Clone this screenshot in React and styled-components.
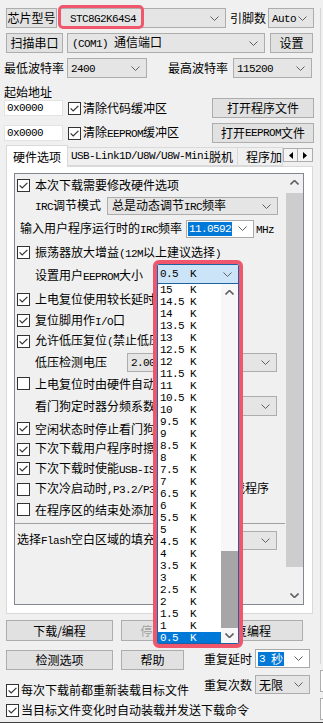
import React from 'react';
import styled, { createGlobalStyle } from 'styled-components';

const GlobalStyle = createGlobalStyle`
  html, body { margin: 0; padding: 0; }
  body {
    background: #f0f0f0;
    font-family: "Noto Sans CJK SC", "Noto Sans", sans-serif;
    font-size: 12px;
    line-height: 1;
    color: #000;
  }
  * { box-sizing: border-box; }
`;

const Window = styled.div`
  position: relative;
  display: flex;
  width: 323px;
  height: 723px;
  overflow: hidden;
  background: #f0f0f0;
  border-bottom: 1px solid #3f3f3f;
`;

const Main = styled.div`
  width: 316px;
  flex-shrink: 0;
  padding: 8px 2px 0 4px;
  display: flex;
  flex-direction: column;
`;

const Edge = styled.div`
  flex: 1;
  display: flex;
  flex-direction: column;
  padding: 8px 0 2px 4px;
`;

const EdgeLine = styled.div`
  flex: 1;
  border-left: 1px solid #d6d6d6;
`;

const EdgeBox = styled.div`
  height: 22px;
  margin-top: 6px;
  border: 1px solid #adadad;
  border-right: 0;
  background: #fff;
`;

const Row = styled.div`
  display: flex;
  align-items: center;
  flex-shrink: 0;
  height: ${(p) => p.$h || 20}px;
  margin-top: ${(p) => p.$mt || 0}px;
  padding-left: ${(p) => p.$pl || 0}px;
  white-space: nowrap;
`;

const Text = styled.span`
  margin-left: ${(p) => p.$ml || 0}px;
  white-space: nowrap;
  flex-shrink: 0;
`;

const M = styled.span`
  font-family: "Liberation Mono", "DejaVu Sans Mono", monospace;
  font-size: 11px;
  letter-spacing: -0.6px;
  white-space: pre;
`;

const Btn = styled.button`
  display: flex;
  align-items: center;
  justify-content: center;
  flex-shrink: 0;
  width: ${(p) => p.$w}px;
  height: ${(p) => p.$h || 20}px;
  margin: 0 0 0 ${(p) => p.$ml || 0}px;
  padding: 0;
  font: inherit;
  font-size: 12px;
  line-height: 1;
  color: ${(p) => (p.$disabled ? '#a0a0a0' : '#000')};
  background: #e1e1e1;
  border: 1px solid #adadad;
  white-space: nowrap;
`;

const ComboBox = styled.div`
  display: flex;
  align-items: center;
  justify-content: space-between;
  flex-shrink: 0;
  width: ${(p) => p.$w}px;
  height: ${(p) => p.$h || 20}px;
  margin-left: ${(p) => p.$ml || 0}px;
  padding: 0 6px 0 ${(p) => (p.$pad === undefined ? 4 : p.$pad)}px;
  background: ${(p) => (p.$edit ? '#fff' : '#e5e5e5')};
  border: 1px solid ${(p) => (p.$edit ? '#a9a9a9' : '#adadad')};
  white-space: nowrap;
  overflow: hidden;
`;

const Sel = styled.span`
  display: inline-flex;
  align-items: center;
  height: 14px;
  padding: 0 1px;
  background: #0078d7;
  color: #fff;
`;

const Chevron = ({ up, width = 1 }) => (
  <svg width="9" height="5" viewBox="0 0 9 5" style={{ flexShrink: 0 }}>
    <polyline
      points={up ? '0.5,4.5 4.5,0.5 8.5,4.5' : '0.5,0.5 4.5,4.5 8.5,0.5'}
      fill="none"
      stroke="#606060"
      strokeWidth={width}
    />
  </svg>
);

const Combo = ({ children, ...rest }) => (
  <ComboBox {...rest}>
    <span>{children}</span>
    <Chevron />
  </ComboBox>
);

const CheckBox = styled.span`
  display: inline-flex;
  align-items: center;
  justify-content: center;
  flex-shrink: 0;
  width: 13px;
  height: 13px;
  margin-left: ${(p) => p.$ml || 0}px;
  border: 1px solid #333;
  background: #fff;
`;

const Check = ({ on, ml }) => (
  <CheckBox $ml={ml}>
    {on && (
      <svg width="11" height="11" viewBox="0 0 11 11">
        <path d="M1.6 5.4 L4.2 8 L9.4 2.8" fill="none" stroke="#333" strokeWidth="1.2" />
      </svg>
    )}
  </CheckBox>
);

const TextInput = styled.div`
  display: flex;
  align-items: center;
  width: 59px;
  height: 16px;
  padding-left: 2px;
  background: #fff;
  border: 1px solid #e3e3e3;
`;

const AddrGrid = styled.div`
  display: grid;
  grid-template-columns: 1fr 102px;
  grid-auto-rows: 22px;
  row-gap: 3px;
  align-items: center;
  margin-top: -3px;
`;

/* tabs */
const TabStrip = styled.div`
  position: relative;
  z-index: 1;
  display: flex;
  align-items: flex-end;
  height: 21px;
  margin-top: 1px;
  padding-left: 2px;
`;

const Tab = styled.div`
  display: flex;
  align-items: center;
  justify-content: ${(p) => (p.$active ? 'center' : 'flex-start')};
  flex-shrink: 0;
  width: ${(p) => p.$w}px;
  height: ${(p) => (p.$active ? 22 : 19)}px;
  margin-bottom: ${(p) => (p.$active ? -1 : 0)}px;
  padding-left: ${(p) => p.$pl || 0}px;
  background: ${(p) => (p.$active ? '#fff' : '#f0f0f0')};
  border: 1px solid #d9d9d9;
  border-bottom: ${(p) => (p.$active ? '0' : '1px solid #d9d9d9')};
  border-left: ${(p) => (p.$first ? '1px solid #d9d9d9' : '0')};
  overflow: hidden;
  white-space: nowrap;
`;

const TabArrow = styled.div`
  display: flex;
  align-items: center;
  justify-content: center;
  align-self: flex-start;
  flex-shrink: 0;
  width: 15px;
  height: 14px;
  margin-top: 3px;
  background: #f4f4f4;
  border: 1px solid #adadad;
  border-left: ${(p) => (p.$first ? '1px solid #adadad' : '0')};
`;

const Panel = styled.div`
  display: flex;
  width: 307px;
  height: 448px;
  margin-left: 2px;
  padding: 6px 8px 8px 7px;
  background: #fff;
  border: 1px solid #d9d9d9;
`;

const PropBox = styled.div`
  flex: 1;
  display: flex;
  border: 1px solid #828790;
  background: #f0f0f0;
  overflow: hidden;
`;

const PropArea = styled.div`
  flex: 1;
  display: flex;
  flex-direction: column;
  overflow: hidden;
`;

const Separator = styled.div`
  height: 1px;
  margin: 4px 1px 0 0;
  background: #a0a0a0;
`;

const ScrollBar = styled.div`
  display: flex;
  flex-direction: column;
  width: 17px;
  flex-shrink: 0;
  background: ${(p) => p.$track || '#f0f0f0'};
`;

const ScrollArrow = styled.div`
  display: flex;
  align-items: center;
  justify-content: center;
  height: ${(p) => p.$h || 17}px;
  flex-shrink: 0;
`;

const ScrollTrack = styled.div`
  flex: 1;
  display: flex;
  flex-direction: column;
  justify-content: ${(p) => p.$align || 'flex-start'};
`;

const Thumb = styled.div`
  height: ${(p) => p.$h}px;
  margin-top: ${(p) => p.$mt || 0}px;
  background: ${(p) => p.$color};
`;

/* bottom */
const Lower = styled.div`
  display: flex;
  margin-top: 8px;
`;

const LowerLeft = styled.div`
  flex: 1;
  min-width: 0;
  display: flex;
  flex-direction: column;
`;

const LowerRight = styled.div`
  width: 106px;
  flex-shrink: 0;
  margin-right: 4px;
  display: flex;
  flex-direction: column;
`;

/* open dropdown & annotations */
const Highlight = styled.div`
  position: absolute;
  left: 58px;
  top: 5px;
  width: 86px;
  height: 24px;
  border: 3px solid #f0566c;
  border-radius: 5px;
`;

const DropFrame = styled.div`
  position: absolute;
  left: 153px;
  top: 260px;
  width: 90px;
  height: 388px;
  display: flex;
  flex-direction: column;
  border: 4px solid #f0566c;
  border-radius: 6px;
  background: #fff;
  overflow: hidden;
`;

const DropHead = styled.div`
  display: flex;
  align-items: center;
  justify-content: space-between;
  height: 20px;
  flex-shrink: 0;
  padding: 0 6px 0 2px;
  background: #cce4f7;
  border: 1px solid #1f62a3;
`;

const DropList = styled.div`
  flex: 1;
  display: flex;
  border: 1px solid #1f62a3;
  border-top: 0;
  overflow: hidden;
`;

const Items = styled.div`
  flex: 1;
  display: flex;
  flex-direction: column;
`;

const Item = styled.div`
  display: flex;
  align-items: center;
  height: 12px;
  flex-shrink: 0;
  padding-left: 2px;
  white-space: pre;
  background: ${(p) => (p.$sel ? '#0078d7' : 'transparent')};
  color: ${(p) => (p.$sel ? '#fff' : '#000')};
`;

const sizes = [];
for (let v = 15; v >= 0.5; v -= 0.5) sizes.push(String(v));
const sizeLabel = (s) => `${s.padEnd(5, ' ')}K`;

const rowH = [22, 20, 25, 23, 24, 22, 21, 20, 22, 21, 24, 21, 20, 19, 22, 19];

const Arrow = ({ dir }) => (
  <svg width="4" height="7" viewBox="0 0 4 7">
    <polygon points={dir === 'left' ? '4,0 0,3.5 4,7' : '0,0 4,3.5 0,7'} fill="#000" />
  </svg>
);

export default function App() {
  return (
    <>
      <GlobalStyle />
      <Window>
        <Main>
          <Row>
            <Btn $w={51} $ml={2}>芯片型号</Btn>
            <Combo $w={166} $ml={3} $pad={9}><M>STC8G2K64S4</M></Combo>
            <Text $ml={4}>引脚数</Text>
            <Combo $w={46} $ml={2} $pad={3}><M>Auto</M></Combo>
          </Row>
          <Row $mt={5}>
            <Btn $w={57} $ml={2}>扫描串口</Btn>
            <Combo $w={198} $ml={4}><M>(COM1) </M>通信端口</Combo>
            <Btn $w={43} $ml={5}>设置</Btn>
          </Row>
          <Row $mt={5}>
            <Text>最低波特率</Text>
            <Combo $w={80} $ml={3} $pad={3}><M>2400</M></Combo>
            <Text $ml={21}>最高波特率</Text>
            <Combo $w={79} $ml={5} $pad={3}><M>115200</M></Combo>
          </Row>
          <Row $mt={6} $h={16}>
            <Text>起始地址</Text>
          </Row>
          <AddrGrid>
            <Row>
              <TextInput><M>0x0000</M></TextInput>
              <Check on ml={5} />
              <Text $ml={2}>清除代码缓冲区</Text>
            </Row>
            <Btn $w={102}>打开程序文件</Btn>
            <Row>
              <TextInput><M>0x0000</M></TextInput>
              <Check on ml={5} />
              <Text $ml={2}>清除<M>EEPROM</M>缓冲区</Text>
            </Row>
            <Btn $w={102}>打开<M>EEPROM</M>文件</Btn>
          </AddrGrid>

          <TabStrip>
            <Tab $active $first $w={62}>硬件选项</Tab>
            <Tab $w={170} $pl={3}><M>USB-Link1D/U8W/U8W-Mini</M>脱机</Tab>
            <Tab $w={45} $pl={8}>程序加密后传输</Tab>
            <TabArrow $first><Arrow dir="left" /></TabArrow>
            <TabArrow><Arrow dir="right" /></TabArrow>
          </TabStrip>
          <Panel>
            <PropBox>
              <PropArea>
                <Row $h={rowH[0]} $pl={2}>
                  <Check on />
                  <Text $ml={5}>本次下载需要修改硬件选项</Text>
                </Row>
                <Row $h={rowH[1]} $pl={20}>
                  <Text><M>IRC</M>调节模式</Text>
                  <Combo $w={171} $h={18} $ml={6}>总是动态调节<M>IRC</M>频率</Combo>
                </Row>
                <Row $h={rowH[2]} $pl={5}>
                  <Text>输入用户程序运行时的<M>IRC</M>频率</Text>
                  <Combo $w={68} $h={18} $ml={4} $pad={1} $edit><Sel><M>11.0592</M></Sel></Combo>
                  <Text $ml={2}><M>MHz</M></Text>
                </Row>
                <Row $h={rowH[3]} $pl={2}>
                  <Check on />
                  <Text $ml={5}>振荡器放大增益<M>(12M</M>以上建议选择<M>)</M></Text>
                </Row>
                <Row $h={rowH[4]} $pl={20}>
                  <Text>设置用户<M>EEPROM</M>大小</Text>
                </Row>
                <Row $h={rowH[5]} $pl={2}>
                  <Check on />
                  <Text $ml={5}>上电复位使用较长延时</Text>
                </Row>
                <Row $h={rowH[6]} $pl={2}>
                  <Check on />
                  <Text $ml={5}>复位脚用作<M>I/O</M>口</Text>
                </Row>
                <Row $h={rowH[7]} $pl={2}>
                  <Check on />
                  <Text $ml={5}>允许低压复位<M>(</M>禁止低压中断<M>)</M></Text>
                </Row>
                <Row $h={rowH[8]} $pl={20}>
                  <Text>低压检测电压</Text>
                  <Combo $w={150} $h={19} $ml={20} $pad={3}><M>2.00V</M></Combo>
                </Row>
                <Row $h={rowH[9]} $pl={2}>
                  <Check />
                  <Text $ml={5}>上电复位时由硬件自动启动看门狗</Text>
                </Row>
                <Row $h={rowH[10]} $pl={20}>
                  <Text>看门狗定时器分频系数</Text>
                  <Combo $w={116} $h={20} $ml={6} $pad={3}><M>256</M></Combo>
                </Row>
                <Row $h={rowH[11]} $pl={2}>
                  <Check on />
                  <Text $ml={5}>空闲状态时停止看门狗计数</Text>
                </Row>
                <Row $h={rowH[12]} $pl={2}>
                  <Check on />
                  <Text $ml={5}>下次下载用户程序时擦除用户<M>EEPROM</M>区</Text>
                </Row>
                <Row $h={rowH[13]} $pl={2}>
                  <Check on />
                  <Text $ml={5}>下次下载时使能<M>USB-ISP</M>下载</Text>
                </Row>
                <Row $h={rowH[14]} $pl={2}>
                  <Check />
                  <Text $ml={5}>下次冷启动时<M>,P3.2/P3.3</M>为<M>0/0</M>才可下载程序</Text>
                </Row>
                <Row $h={rowH[15]} $pl={2}>
                  <Check />
                  <Text $ml={5}>在程序区的结束处添加重要测试参数</Text>
                </Row>
                <Separator />
                <Row $h={20} $mt={6} $pl={2}>
                  <Text>选择<M>Flash</M>空白区域的填充值</Text>
                  <Combo $w={104} $h={19} $ml={6} $pad={3}><M>FF</M></Combo>
                </Row>
              </PropArea>
              <ScrollBar>
                <ScrollArrow><Chevron up width={1.6} /></ScrollArrow>
                <ScrollTrack>
                  <Thumb $h={374} $mt={2} $color="#cdcdcd" />
                </ScrollTrack>
                <ScrollArrow><Chevron width={1.6} /></ScrollArrow>
              </ScrollBar>
            </PropBox>
          </Panel>

          <Row $mt={6} $h={21}>
            <Btn $w={107} $h={21} $ml={2}>下载/编程</Btn>
            <Btn $w={63} $h={21} $ml={8} $disabled>停止</Btn>
            <Btn $w={112} $h={21} $ml={7}>重复编程</Btn>
          </Row>
          <Lower>
            <LowerLeft>
              <Row $mt={1}>
                <Btn $w={107} $ml={2}>检测选项</Btn>
                <Btn $w={63} $ml={8}>帮助</Btn>
              </Row>
              <Row $mt={10} $pl={2}>
                <Check on />
                <Text $ml={2}>每次下载前都重新装载目标文件</Text>
              </Row>
              <Row $pl={2}>
                <Check on />
                <Text $ml={2}>当目标文件变化时自动装载并发送下载命令</Text>
              </Row>
            </LowerLeft>
            <LowerRight>
              <Row $h={19}>
                <Text>重复延时</Text>
                <Combo $w={55} $h={19} $ml={3} $pad={2} $edit><Sel><M>3 </M>秒</Sel></Combo>
              </Row>
              <Row $h={19} $mt={7}>
                <Text>重复次数</Text>
                <Combo $w={55} $h={19} $ml={3} $pad={3}>无限</Combo>
              </Row>
            </LowerRight>
          </Lower>
        </Main>
        <Edge>
          <EdgeLine />
          <EdgeBox />
          <EdgeBox />
        </Edge>

        <Highlight />
        <DropFrame>
          <DropHead>
            <M>{sizeLabel('0.5')}</M>
            <Chevron />
          </DropHead>
          <DropList>
            <Items>
              {sizes.map((s) => (
                <Item key={s} $sel={s === '0.5'}>
                  <M>{sizeLabel(s)}</M>
                </Item>
              ))}
            </Items>
            <ScrollBar $track="#f7f7f7">
              <ScrollArrow><Chevron up width={1.6} /></ScrollArrow>
              <ScrollTrack $align="flex-end">
                <Thumb $h={77} $color="#a6a6a6" />
              </ScrollTrack>
              <ScrollArrow $h={15}><Chevron width={1.6} /></ScrollArrow>
            </ScrollBar>
          </DropList>
        </DropFrame>
      </Window>
    </>
  );
}
